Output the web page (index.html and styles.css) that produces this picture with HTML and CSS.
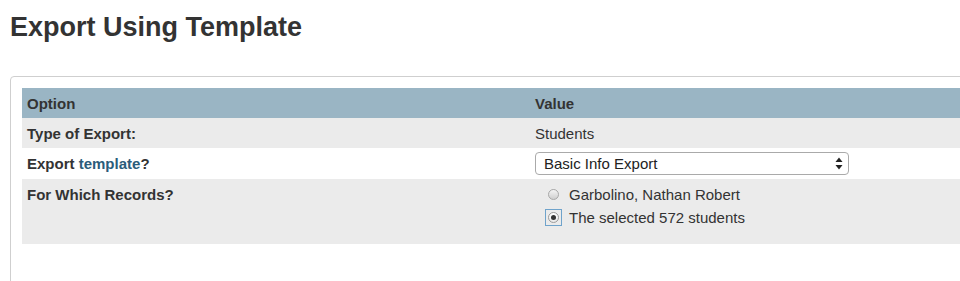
FILE: index.html
```html
<!DOCTYPE html>
<html lang="en">
<head>
  <meta charset="UTF-8">
  <title>Export Using Template</title>
  <meta name="viewport" content="width=device-width, initial-scale=1">
  <link rel="stylesheet" href="styles.css">
</head>
<body>
  <h1 class="page-title">Export Using Template</h1>

  <div class="panel">
    <table class="options">
      <thead>
        <tr>
          <th class="col-option">Option</th>
          <th>Value</th>
        </tr>
      </thead>
      <tbody>
        <tr class="shaded">
          <td class="label">Type of Export:</td>
          <td>Students</td>
        </tr>
        <tr>
          <td class="label">Export <a href="#" class="help-link">template</a>?</td>
          <td class="select-cell">
            <div class="select-wrap">
              <select id="template" name="template">
                <option selected>Basic Info Export</option>
                <option>Full Export</option>
              </select>
              <svg class="select-arrows" width="8" height="13" viewBox="0 0 8 13">
                <path d="M4 0.5 L7.5 5 L0.5 5 Z" fill="#222"/>
                <path d="M4 12.5 L7.5 8 L0.5 8 Z" fill="#222"/>
              </svg>
            </div>
          </td>
        </tr>
        <tr class="shaded">
          <td class="label top">For Which Records?</td>
          <td class="radio-cell">
            <label class="radio-row">
              <span class="radio-box"><input type="radio" name="records" value="one"></span>
              <span>Garbolino, Nathan Robert</span>
            </label>
            <label class="radio-row">
              <span class="radio-box focused"><input type="radio" name="records" value="selected" checked></span>
              <span>The selected 572 students</span>
            </label>
          </td>
        </tr>
      </tbody>
    </table>
  </div>
</body>
</html>
```

FILE: styles.css
```css
html, body {
  overflow: hidden;
}

body {
  font-family: "Liberation Sans", Arial, Helvetica, sans-serif;
  font-size: 15px;
  color: #333;
  background-color: #fff;
  margin: 0;
  padding: 12px 0 0 10px;
}

.page-title {
  font-size: 27px;
  line-height: 30px;
  font-weight: bold;
  color: #333;
  margin: 0 0 34px 0;
}

.panel {
  width: 1100px;
  height: 240px;
  padding: 11px;
  border: 1px solid #cfcfcf;
  border-radius: 4px;
}

.options {
  width: 100%;
  border-collapse: collapse;
}

.options th {
  background-color: #9ab5c4;
  text-align: left;
  font-weight: bold;
  color: #333;
  height: 30px;
  padding: 0 5px;
}

.col-option {
  width: 498px;
}

.options td {
  height: 30px;
  padding: 0 5px;
  vertical-align: middle;
}

.options tr.shaded td {
  background-color: #ebebeb;
}

.label {
  font-weight: bold;
}

.label.top {
  vertical-align: top;
  padding-top: 8px;
  line-height: 16px;
}

.help-link {
  color: #2b5c7a;
  text-decoration: none;
}

.options td.select-cell {
  height: 31px;
}

.select-wrap {
  position: relative;
  width: 314px;
}

.select-wrap select {
  appearance: none;
  -webkit-appearance: none;
  width: 100%;
  height: 23px;
  margin: 0;
  padding: 0 8px;
  font-family: inherit;
  font-size: 15px;
  color: #222;
  background-color: #fff;
  border: 1px solid #aaa;
  border-radius: 4px;
}

.select-arrows {
  position: absolute;
  right: 6px;
  top: 5px;
  pointer-events: none;
}

.options td.radio-cell {
  vertical-align: top;
  padding: 4px 5px 15px 5px;
}

.radio-row {
  display: flex;
  align-items: center;
  height: 23px;
}

.radio-box {
  display: flex;
  align-items: center;
  justify-content: center;
  width: 15px;
  height: 15px;
  margin: 0 7px 0 10px;
  border: 1px solid transparent;
}

.radio-box.focused {
  border-color: #6fa3cb;
}

.radio-box input {
  appearance: none;
  -webkit-appearance: none;
  width: 11px;
  height: 11px;
  margin: 0;
  border: 1px solid #a8a8a8;
  border-radius: 50%;
  background: linear-gradient(#f4f4f4, #cfcfcf);
  position: relative;
}

.radio-box input:checked {
  border-color: #9a9a9a;
  background: linear-gradient(#fff, #e8e8e8);
}

.radio-box input:checked::after {
  content: "";
  position: absolute;
  left: 2px;
  top: 2px;
  width: 5px;
  height: 5px;
  border-radius: 50%;
  background-color: #333;
}

.radio-row span {
  color: #333;
}
```
